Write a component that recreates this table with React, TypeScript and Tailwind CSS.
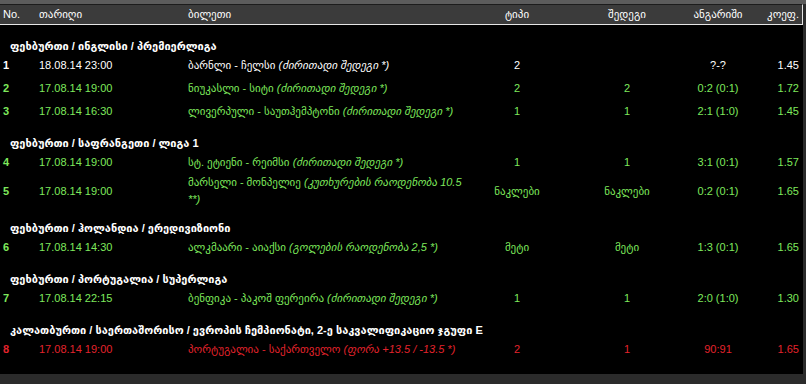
import React from "react";

type Row = {
  no: number;
  date: string;
  match: string;
  note: string;
  noteWrap?: string;
  type: string;
  result: string;
  score: string;
  coef: string;
  tone: "white" | "green" | "red";
};

type Section = { title: string; rows: Row[] };

const sections: Section[] = [
  {
    title: "ფეხბურთი / ინგლისი / პრემიერლიგა",
    rows: [
      { no: 1, date: "18.08.14 23:00", match: "ბარნლი - ჩელსი", note: "(ძირითადი შედეგი *)", type: "2", result: "", score: "?-?", coef: "1.45", tone: "white" },
      { no: 2, date: "17.08.14 19:00", match: "ნიუკასლი - სიტი", note: "(ძირითადი შედეგი *)", type: "2", result: "2", score: "0:2 (0:1)", coef: "1.72", tone: "green" },
      { no: 3, date: "17.08.14 16:30", match: "ლივერპული - საუთჰემპტონი", note: "(ძირითადი შედეგი *)", type: "1", result: "1", score: "2:1 (1:0)", coef: "1.45", tone: "green" },
    ],
  },
  {
    title: "ფეხბურთი / საფრანგეთი / ლიგა 1",
    rows: [
      { no: 4, date: "17.08.14 19:00", match: "სტ. ეტიენი - რეიმსი", note: "(ძირითადი შედეგი *)", type: "1", result: "1", score: "3:1 (0:1)", coef: "1.57", tone: "green" },
      { no: 5, date: "17.08.14 19:00", match: "მარსელი - მონპელიე", note: "(კუთხურების რაოდენობა 10.5", noteWrap: "**)", type: "ნაკლები", result: "ნაკლები", score: "0:2 (0:1)", coef: "1.65", tone: "green" },
    ],
  },
  {
    title: "ფეხბურთი / ჰოლანდია / ერედივიზიონი",
    rows: [
      { no: 6, date: "17.08.14 14:30", match: "ალკმაარი - აიაქსი", note: "(გოლების რაოდენობა 2,5 *)", type: "მეტი", result: "მეტი", score: "1:3 (0:1)", coef: "1.65", tone: "green" },
    ],
  },
  {
    title: "ფეხბურთი / პორტუგალია / სუპერლიგა",
    rows: [
      { no: 7, date: "17.08.14 22:15", match: "ბენფიკა - პაკოშ ფერეირა", note: "(ძირითადი შედეგი *)", type: "1", result: "1", score: "2:0 (1:0)", coef: "1.30", tone: "green" },
    ],
  },
  {
    title: "კალათბურთი / საერთაშორისო / ევროპის ჩემპიონატი, 2-ე საკვალიფიკაციო ჯგუფი E",
    rows: [
      { no: 8, date: "17.08.14 19:00", match: "პორტუგალია - საქართველო", note: "(ფორა +13.5 / -13.5 *)", type: "2", result: "1", score: "90:91", coef: "1.65", tone: "red" },
    ],
  },
];

const toneClass = {
  white: "text-white",
  green: "text-[#7ee85c]",
  red: "text-[#e3232c]",
};

function BetRow({ row }: { row: Row }) {
  return (
    <div className={`flex items-center text-[11px] ${toneClass[row.tone]} ${row.noteWrap ? "h-[34px]" : "h-[23px]"}`}>
      <div className="w-[36px] shrink-0 pl-[3px] font-bold">{row.no}</div>
      <div className="w-[149px] shrink-0 pl-[3px]">{row.date}</div>
      <div className="w-[282px] shrink-0 pl-[3px] whitespace-nowrap leading-[17px]">
        {row.match} <span className="italic">{row.note}</span>
        {row.noteWrap && (
          <>
            <br />
            <span className="italic">{row.noteWrap}</span>
          </>
        )}
      </div>
      <div className="w-[100px] shrink-0 text-center">{row.type}</div>
      <div className="w-[120px] shrink-0 text-center">{row.result}</div>
      <div className="w-[62px] shrink-0 text-center">{row.score}</div>
      <div className="w-[50px] shrink-0 text-right">{row.coef}</div>
    </div>
  );
}

export default function App() {
  return (
    <div className="w-[806px] h-[384px] bg-[#2b2b2b] overflow-hidden" style={{ fontFamily: '"Liberation Sans", "DejaVu Sans", sans-serif' }}>
      <div className="h-[4px] bg-[#5c5c5c]" />
      <div className="w-[803px]">
        <div className="flex items-center h-[21px] bg-[#3b3b3b] border-t border-[#1c1c1c] border-b border-r border-b-[#e6e6e6] border-r-[#e6e6e6] text-[11px] text-white">
          <div className="w-[36px] shrink-0 pl-[3px]">No.</div>
          <div className="w-[149px] shrink-0 pl-[3px]">თარიღი</div>
          <div className="w-[282px] shrink-0 pl-[3px]">ბილეთი</div>
          <div className="w-[100px] shrink-0 text-center">ტიპი</div>
          <div className="w-[120px] shrink-0 text-center">შედეგი</div>
          <div className="w-[62px] shrink-0 text-center">ანგარიში</div>
          <div className="w-[50px] shrink-0 text-right">კოეფ.</div>
        </div>
        <div className="bg-black h-[349px] pt-[1px]">
          {sections.map((s) => (
            <div key={s.title}>
              <div className="pt-[12px] pl-[10px] h-[28px] leading-[16px] text-[11px] font-bold text-white whitespace-nowrap">
                {s.title}
              </div>
              {s.rows.map((r) => (
                <BetRow key={r.no} row={r} />
              ))}
            </div>
          ))}
        </div>
      </div>
    </div>
  );
}
